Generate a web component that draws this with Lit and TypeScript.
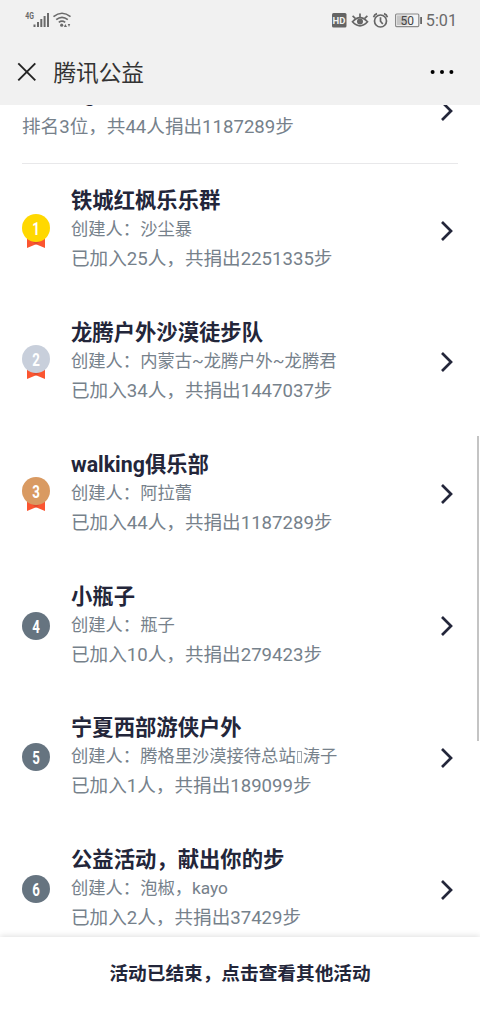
import { LitElement, html, svg, css, nothing } from "lit";
import { customElement, property } from "lit/decorators.js";
import { classMap } from "lit/directives/class-map.js";

interface Team {
  rank: number;
  name: string;
  creator: string[];
  members: number;
  steps: number;
}

const TEAMS: Team[] = [
  { rank: 1, name: "铁城红枫乐乐群", creator: ["沙尘暴"], members: 25, steps: 2251335 },
  { rank: 2, name: "龙腾户外沙漠徒步队", creator: ["内蒙古~龙腾户外~龙腾君"], members: 34, steps: 1447037 },
  { rank: 3, name: "walking俱乐部", creator: ["阿拉蕾"], members: 44, steps: 1187289 },
  { rank: 4, name: "小瓶子", creator: ["瓶子"], members: 10, steps: 279423 },
  { rank: 5, name: "宁夏西部游侠户外", creator: ["腾格里沙漠接待总站", "涛子"], members: 1, steps: 189099 },
  { rank: 6, name: "公益活动，献出你的步", creator: ["泡椒，kayo"], members: 2, steps: 37429 },
];

const MEDALS = ["#ffd800", "#c8cfdb", "#d99a62"];

const chevron = html`<svg class="chevron" width="14" height="22" viewBox="0 0 14 22">
  <path d="M2 2 L11 11 L2 20" fill="none" stroke="#23263a" stroke-width="2.7" />
</svg>`;

@customElement("rank-badge")
export class RankBadge extends LitElement {
  @property({ type: Number }) rank = 1;

  static styles = css`
    :host { display: block; width: 28px; height: 34px; }
    svg { display: block; }
    .digit { font: 700 19px Roboto, sans-serif; fill: #fff; text-anchor: middle; }
  `;

  render() {
    const medal = this.rank <= 3;
    return html`<svg width="28" height="34" viewBox="0 0 28 34">
      ${medal
        ? svg`<path d="M5 23 L14 28 L23 23 V34 L14 30.3 L5 34 Z" fill="#fb5530" />
              <path d="M9 26 L14 31 L19 26 Z" fill="#c9402c" opacity=".5" />`
        : nothing}
      <circle cx="14" cy="14" r="14" fill=${medal ? MEDALS[this.rank - 1] : "#667480"} />
      <text class="digit" transform="translate(14 20.7) scale(.7 1)">${this.rank}</text>
    </svg>`;
  }
}

@customElement("status-bar")
export class StatusBar extends LitElement {
  static styles = css`
    :host { display: flex; align-items: center; justify-content: space-between; height: 40px; padding: 0 23px 0 25px; }
    .clock { font: 400 16.2px/20px Roboto, sans-serif; color: #6a6a6a; position: relative; top: 1px; }
    .group { display: flex; align-items: center; }
    svg { display: block; }
    .net { font: 700 9.5px Roboto, sans-serif; fill: #666; }
    .hd { font: 700 9.5px Roboto, sans-serif; fill: #f1f1f1; }
    .level { font: 400 12px Roboto, sans-serif; fill: #444; }
  `;

  render() {
    return html`
      <svg width="48" height="20" viewBox="25 10 48 20">
        <text class="net" transform="translate(25.3 19.2) scale(.72 1)">4G</text>
        <g fill="#6a6a6a">
          <rect x="33.5" y="24.5" width="2" height="2.5" />
          <rect x="37" y="22" width="2" height="5" />
          <rect x="40.3" y="19" width="2" height="8" />
          <rect x="43.6" y="16" width="2" height="11" />
          <rect x="47" y="13" width="2" height="14" />
          <circle cx="61.7" cy="25.2" r="1.6" />
          <path d="M65.3 24 L67 27 H63.9 Z M67.8 24 h2.4 L69 27 Z" />
        </g>
        <g fill="none" stroke="#6a6a6a" stroke-width="1.7">
          <path d="M53.5 16.6 Q62 9.9 70.5 16.6" />
          <path d="M56.2 19.6 Q62 15 67.8 19.6" />
          <path d="M58.8 22.4 Q62 20 65.2 22.4" />
        </g>
      </svg>
      <div class="group">
        <svg width="93.6" height="20" viewBox="332 10 93.6 20">
          <rect x="332" y="13" width="14.5" height="14.5" rx="1.5" fill="#646464" />
          <text class="hd" x="332.6" y="23.7">HD</text>
          <g fill="none" stroke="#666" stroke-width="1.7">
            <path d="M352.5 21.8 Q360 13.6 367.5 21.8 Q360 30 352.5 21.8 Z" />
            <path d="M360 17 V13.5 M355.3 18.3 L352.6 15.8 M364.7 18.3 L367.4 15.8" />
            <circle cx="380.5" cy="21" r="6" />
            <path d="M380.5 17.2 V21.3 L382.8 24 M373.6 17.3 Q374.3 14.4 377 13.6 M387.4 17.3 Q386.7 14.4 384 13.6" />
          </g>
          <circle cx="360" cy="21.5" r="3" fill="#666" />
          <rect x="395.6" y="14" width="23.2" height="12.6" rx="1" fill="#f4f4f4" stroke="#8a8a8a" stroke-width="1.2" />
          <rect x="397" y="15.4" width="10.5" height="9.8" fill="#c6c6c6" />
          <rect x="420.2" y="17" width="1.8" height="7" fill="#666" />
          <text class="level" x="400.5" y="24.6">50</text>
        </svg>
        <span class="clock">5:01</span>
      </div>
    `;
  }
}

@customElement("team-row")
export class TeamRow extends LitElement {
  @property({ attribute: false }) team!: Team;

  static styles = css`
    :host { display: flex; align-items: center; height: 131.8px; padding: 0 26px 0 22px; box-sizing: border-box; }
    .badge { flex: none; margin-right: 21px; }
    .badge.medal { margin-top: 0; }
    .badge.plain { margin-top: 5px; }
    .info { flex: 1; min-width: 0; white-space: nowrap; color: #76818b; }
    .name { font-size: 21.33px; line-height: 30px; font-weight: 700; color: #23263a; }
    .creator { font-size: 17.3px; line-height: 27px; }
    .stats { font-size: 18.6px; line-height: 32px; }
    .missing { display: inline-block; width: 5px; height: 12px; margin: 0 1px; border: 1px solid #a0a8af; box-sizing: border-box; vertical-align: -1px; }
  `;

  render() {
    const t = this.team;
    const medal = t.rank <= 3;
    return html`
      <rank-badge class=${classMap({ badge: true, medal, plain: !medal })} .rank=${t.rank}></rank-badge>
      <div class="info">
        <div class="name">${t.name}</div>
        <div class="creator">创建人：${t.creator.map((part, i) => html`${i ? html`<span class="missing"></span>` : nothing}${part}`)}</div>
        <div class="stats">已加入${t.members}人，共捐出${t.steps}步</div>
      </div>
      ${chevron}
    `;
  }
}

@customElement("app-root")
export class AppRoot extends LitElement {
  static styles = css`
    :host {
      display: flex; flex-direction: column; height: 1012px; overflow: hidden; position: relative;
      background: #fff; font-family: Roboto, "Noto Sans CJK SC", sans-serif;
    }
    .top { flex: none; height: 104.5px; background: #f1f1f1; }
    .nav { display: flex; align-items: center; height: 64px; padding: 0 26px 0 17px; }
    .title { flex: 1; margin-left: 16.4px; padding-top: 3px; font-size: 22.67px; line-height: 32px; color: #333; }
    .list { flex: 1; min-height: 0; overflow: hidden; }
    .mine { display: flex; justify-content: space-between; align-items: center; height: 106px; margin: -46.5px 22px .8px; padding-right: 4px; border-bottom: 1px solid #e8e8ea; box-sizing: border-box; }
    .mine-name { font-size: 21.33px; line-height: 28px; font-weight: 700; color: #23263a; }
    .mine-stats { font-size: 18.6px; line-height: 30px; padding-top: 4px; color: #76818b; }
    .footer {
      flex: none; display: flex; justify-content: center; align-items: center; height: 75px; padding-bottom: 6px; box-sizing: border-box;
      box-shadow: 0 -1px 6px rgba(0, 0, 0, .13); background: #fff; position: relative;
      font-size: 18.67px; font-weight: 700; color: #23263a;
    }
    .thumb { position: absolute; right: 1px; top: 436px; width: 2px; height: 305px; background: #c4c4c4; }
  `;

  render() {
    return html`
      <header class="top">
        <status-bar></status-bar>
        <div class="nav">
          <svg width="20" height="20" viewBox="0 0 20 20">
            <path d="M1.3 1.3 L18.3 18.3 M18.3 1.3 L1.3 18.3" stroke="#222" stroke-width="1.9" fill="none" />
          </svg>
          <div class="title">腾讯公益</div>
          <svg width="24" height="6" viewBox="0 0 24 6">
            <circle cx="2.6" cy="3" r="2" /><circle cx="12" cy="3" r="2" /><circle cx="21.4" cy="3" r="2" />
          </svg>
        </div>
      </header>
      <main class="list">
        <section class="mine">
          <div>
            <div class="mine-name">walking俱乐部</div>
            <div class="mine-stats">排名3位，共44人捐出1187289步</div>
          </div>
          ${chevron}
        </section>
        ${TEAMS.map((team) => html`<team-row .team=${team}></team-row>`)}
      </main>
      <footer class="footer">活动已结束，点击查看其他活动</footer>
      <div class="thumb"></div>
    `;
  }
}
